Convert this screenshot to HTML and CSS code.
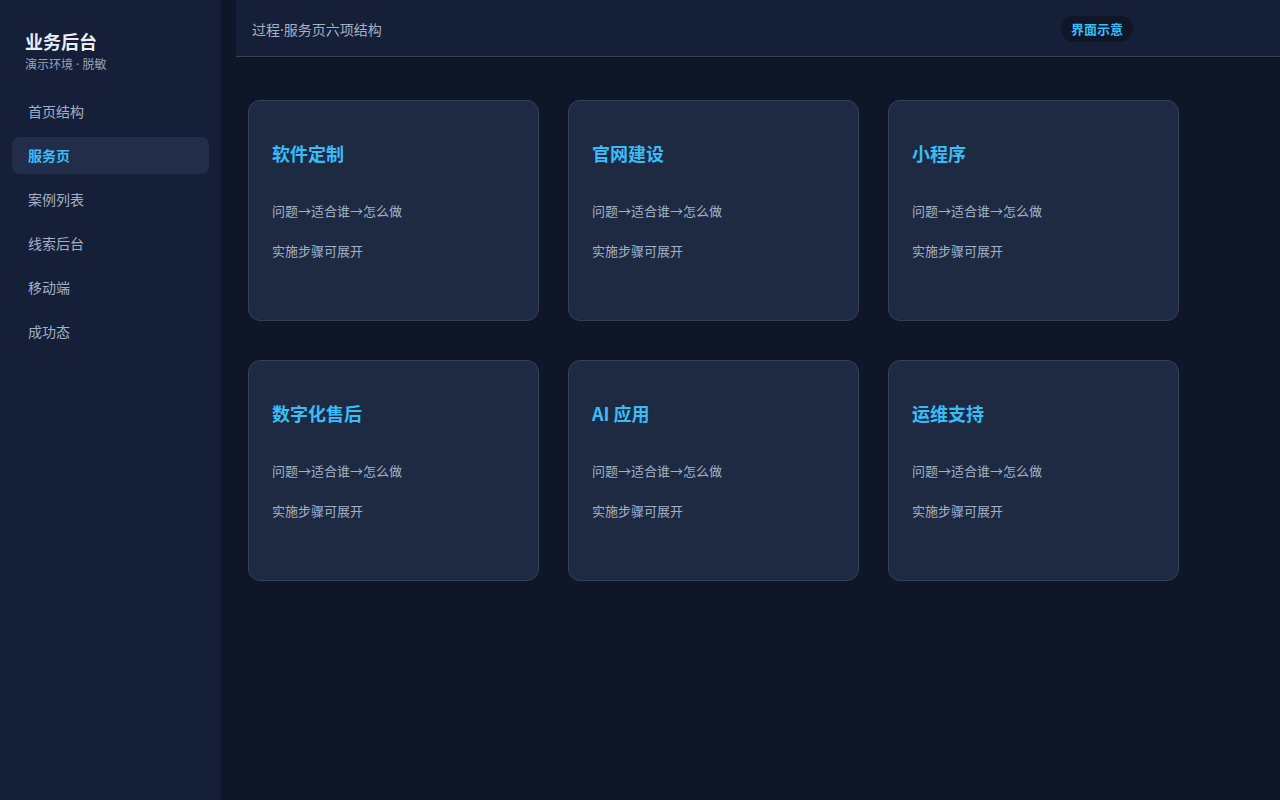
FILE: index.html
```html
<!DOCTYPE html>
<html lang="zh-CN">
<head>
<meta charset="utf-8">
<title>业务后台</title>
<link rel="stylesheet" href="styles.css">
</head>
<body>
<div class="app">
  <aside class="sidebar">
    <div class="brand">
      <div class="brand-title">业务后台</div>
      <div class="brand-sub">演示环境 · 脱敏</div>
    </div>
    <nav class="nav">
      <div class="nav-item">首页结构</div>
      <div class="nav-item active">服务页</div>
      <div class="nav-item">案例列表</div>
      <div class="nav-item">线索后台</div>
      <div class="nav-item">移动端</div>
      <div class="nav-item">成功态</div>
    </nav>
  </aside>
  <main class="main">
    <header class="topbar">
      <div class="crumb">过程·服务页六项结构</div>
      <div class="badge">界面示意</div>
    </header>
    <section class="grid">
      <div class="card"><h3 class="card-title">软件定制</h3><p class="card-line">问题→适合谁→怎么做</p><p class="card-line">实施步骤可展开</p></div>
      <div class="card"><h3 class="card-title">官网建设</h3><p class="card-line">问题→适合谁→怎么做</p><p class="card-line">实施步骤可展开</p></div>
      <div class="card"><h3 class="card-title">小程序</h3><p class="card-line">问题→适合谁→怎么做</p><p class="card-line">实施步骤可展开</p></div>
      <div class="card"><h3 class="card-title">数字化售后</h3><p class="card-line">问题→适合谁→怎么做</p><p class="card-line">实施步骤可展开</p></div>
      <div class="card"><h3 class="card-title">AI 应用</h3><p class="card-line">问题→适合谁→怎么做</p><p class="card-line">实施步骤可展开</p></div>
      <div class="card"><h3 class="card-title">运维支持</h3><p class="card-line">问题→适合谁→怎么做</p><p class="card-line">实施步骤可展开</p></div>
    </section>
  </main>
</div>
</body>
</html>
```

FILE: styles.css
```css
* { box-sizing: border-box; }
html, body { margin: 0; padding: 0; }
body {
  background: #0e1628;
  font-family: "Noto Sans CJK SC", "Noto Sans", sans-serif;
  color: #e2e8f0;
  width: 1280px;
  height: 800px;
  overflow: hidden;
}
.app {
  display: flex;
  height: 800px;
}
.sidebar {
  width: 221px;
  flex: none;
  background: #151f38;
  padding: 28px 12px 0 12px;
}
.brand {
  padding-left: 13px;
  margin-bottom: 22px;
}
.brand-title {
  font-size: 18px;
  font-weight: 700;
  color: #e8edf5;
  line-height: 26px;
}
.brand-sub {
  font-family: "Noto Sans", "Noto Sans CJK SC", sans-serif;
  font-size: 12px;
  color: #94a3b8;
  line-height: 16px;
  margin-top: 3px;
  margin-bottom: -2px;
}
.nav {
  display: flex;
  flex-direction: column;
  gap: 7px;
}
.nav-item {
  height: 37px;
  line-height: 37px;
  padding-left: 16px;
  font-size: 14px;
  color: #a3b0c4;
  border-radius: 8px;
}
.nav-item.active {
  background: #222d4a;
  color: #38bdf8;
  font-weight: 700;
}
.main {
  flex: 1;
  padding-left: 15px;
  display: flex;
  flex-direction: column;
}
.topbar {
  height: 57px;
  background: #151f38;
  border-bottom: 1px solid #34425e;
  display: flex;
  align-items: center;
  padding: 0 0 0 16px;
}
.crumb {
  font-family: "Noto Sans", "Noto Sans CJK SC", sans-serif;
  font-size: 14px;
  color: #a3b0c4;
  flex: 1;
  margin-top: 1px;
}
.badge {
  background: #0e1628;
  color: #38bdf8;
  font-size: 13px;
  font-weight: 700;
  height: 26px;
  line-height: 26px;
  padding: 0 10px;
  border-radius: 13px;
  margin-right: 147px;
  margin-top: 2px;
}
.grid {
  display: grid;
  grid-template-columns: repeat(3, 291px);
  column-gap: 29px;
  row-gap: 39px;
  padding: 43px 0 0 12px;
}
.card {
  height: 221px;
  background: #1e2a42;
  border: 1px solid #33415e;
  border-radius: 12px;
  padding: 39px 23px 0 23px;
}
.card-title {
  margin: 0 0 35px 0;
  font-size: 18px;
  font-weight: 700;
  color: #38bdf8;
  line-height: 26px;
}
.card-line {
  margin: 0 0 21px 0;
  font-size: 13px;
  line-height: 19px;
  color: #a3b0c4;
}
```
